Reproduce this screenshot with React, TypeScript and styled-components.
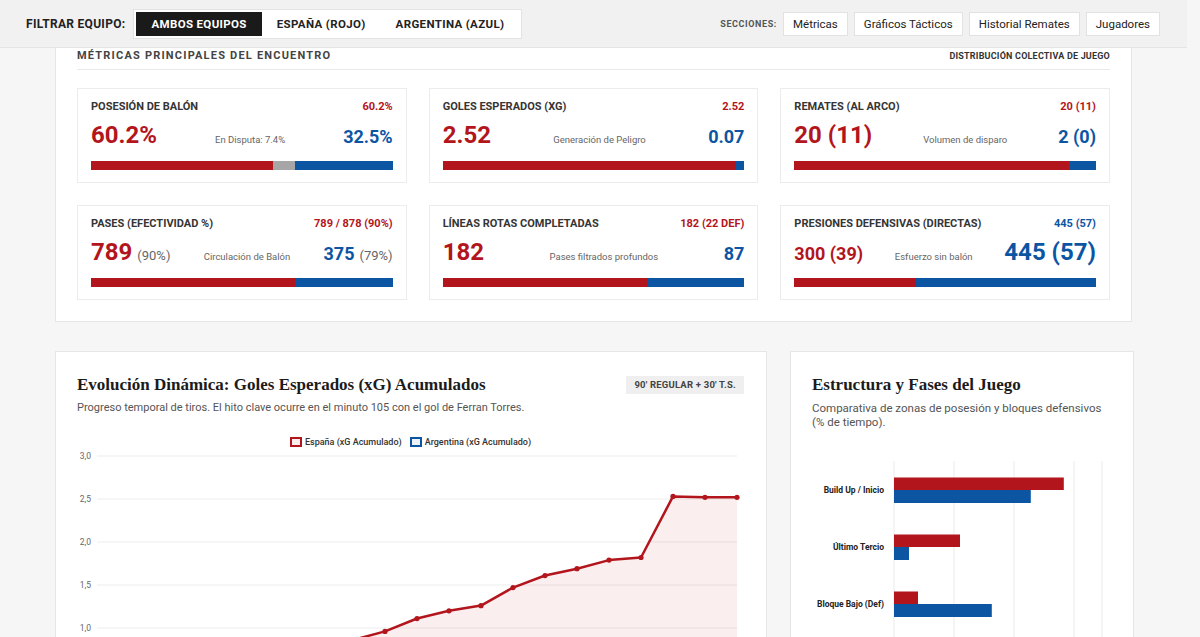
import React from 'react';
import styled, { createGlobalStyle } from 'styled-components';

const RED = '#b3151d';
const BLUE = '#0c55a3';
const GREY = '#a6a6a6';

const GlobalStyle = createGlobalStyle`
  * { box-sizing: border-box; }
  html, body { margin: 0; padding: 0; }
  body {
    background: #f6f6f6;
    font-family: Roboto, "Liberation Sans", Arial, sans-serif;
    color: #222;
    overflow-x: hidden;
  }
`;

const Page = styled.div`
  width: 1187px;
  padding-bottom: 40px;
`;

/* ---------- top toolbar ---------- */

const TopBar = styled.header`
  height: 48px;
  display: flex;
  align-items: center;
  justify-content: space-between;
  padding: 0 27px 0 26px;
  background: #f1f1f1;
  border-bottom: 1px solid #e4e4e4;
`;

const ToolGroup = styled.div<{ $gap: number }>`
  display: flex;
  align-items: center;
  gap: ${(p) => p.$gap}px;
`;

const FilterLabel = styled.span`
  font-size: 12px;
  font-weight: 700;
  letter-spacing: 0.3px;
  color: #222;
`;

const Segmented = styled.div`
  display: flex;
  padding: 2px;
  background: #fff;
  border: 1px solid #e3e3e3;
`;

const SegButton = styled.button<{ $active?: boolean }>`
  height: 24px;
  padding: 0 15px;
  border: 0;
  font-family: inherit;
  font-size: 11.5px;
  font-weight: 700;
  letter-spacing: 0.35px;
  text-transform: uppercase;
  background: ${(p) => (p.$active ? '#1a1a1a' : 'transparent')};
  color: ${(p) => (p.$active ? '#fff' : '#222')};
  cursor: pointer;
`;

const SectionsLabel = styled.span`
  font-size: 9px;
  font-weight: 700;
  letter-spacing: 0.6px;
  color: #555;
`;

const SectionButton = styled.button`
  height: 24px;
  padding: 0 9px;
  background: #fff;
  border: 1px solid #e2e2e2;
  font-family: inherit;
  font-size: 11.5px;
  color: #222;
  cursor: pointer;
`;

/* ---------- metrics panel ---------- */

const Main = styled.main`
  width: 1077px;
  margin: 0 auto;
`;

const MetricsPanel = styled.section`
  background: #fff;
  border: 1px solid #e6e6e6;
  border-top: none;
  padding: 0 21px 21px;
`;

const PanelHead = styled.div`
  display: flex;
  align-items: center;
  justify-content: space-between;
  padding: 1px 0 6px;
  border-bottom: 1px solid #e9e9e9;
`;

const PanelHeading = styled.h2`
  margin: 0;
  font-size: 11px;
  line-height: 14px;
  font-weight: 700;
  letter-spacing: 1.2px;
  color: #444;
`;

const PanelNote = styled.span`
  font-size: 9px;
  font-weight: 700;
  letter-spacing: 0.2px;
  color: #333;
`;

const CardsGrid = styled.div`
  margin-top: 18px;
  display: grid;
  grid-template-columns: repeat(3, 1fr);
  gap: 22px;
`;

const MetricCard = styled.article`
  border: 1px solid #ececec;
  padding: 11px 13px 12px;
  background: #fff;
`;

const CardTop = styled.div`
  display: flex;
  justify-content: space-between;
  font-size: 11px;
  line-height: 14px;
  font-weight: 700;
`;

const CardTitle = styled.span`
  color: #353535;
  text-transform: uppercase;
`;

const CardFigure = styled.span<{ $color: string }>`
  color: ${(p) => p.$color};
`;

const ValueRow = styled.div`
  margin-top: 7px;
  height: 28px;
  display: flex;
  align-items: baseline;
  justify-content: space-between;
`;

const BigValue = styled.span<{ $color: string; $lead?: boolean }>`
  font-size: ${(p) => (p.$lead ? '24px' : '18px')};
  line-height: 28px;
  font-weight: 700;
  color: ${(p) => p.$color};
`;

const Suffix = styled.span`
  font-size: 13px;
  font-weight: 400;
  color: #666;
  margin-left: 5px;
`;

const Caption = styled.span`
  font-size: 9.5px;
  color: #666;
`;

const Bar = styled.div`
  display: flex;
  height: 9px;
  margin-top: 12px;
`;

const BarPart = styled.div<{ $color: string; $share: number }>`
  width: ${(p) => p.$share}%;
  background: ${(p) => p.$color};
`;

/* ---------- charts ---------- */

const ChartsRow = styled.div`
  margin-top: 29px;
  display: grid;
  grid-template-columns: 1fr 344px;
  gap: 23px;
  align-items: start;
`;

const ChartPanel = styled.section`
  background: #fff;
  border: 1px solid #e6e6e6;
  padding: 22px 22px 24px 21px;
`;

const ChartHeader = styled.div`
  display: flex;
  align-items: center;
  justify-content: space-between;
`;

const ChartTitle = styled.h3`
  margin: 0;
  font-family: "Liberation Serif", "Times New Roman", serif;
  font-size: 17px;
  line-height: 22px;
  font-weight: 700;
  color: #1b1b1b;
`;

const Badge = styled.span`
  height: 18px;
  line-height: 18px;
  padding: 0 8px;
  background: #efefef;
  font-size: 9.5px;
  font-weight: 700;
  letter-spacing: 0.2px;
  color: #444;
`;

const Subtitle = styled.p<{ $wide?: boolean }>`
  margin: 5px 0 0;
  font-size: ${(p) => (p.$wide ? '11.5px' : '11px')};
  line-height: 14px;
  color: #555;
  max-width: ${(p) => (p.$wide ? '298px' : 'none')};
`;

const Legend = styled.div`
  margin-top: 21px;
  display: flex;
  justify-content: center;
  gap: 8px;
  font-size: 9px;
  line-height: 12px;
  font-weight: 500;
  color: #333;
`;

const LegendItem = styled.span`
  display: flex;
  align-items: center;
  gap: 3px;
`;

const Swatch = styled.span<{ $color: string; $tint: string }>`
  width: 12px;
  height: 10px;
  border: 2px solid ${(p) => p.$color};
  background: ${(p) => p.$tint};
`;

const ChartSvg = styled.svg`
  display: block;
  font-family: Roboto, "Liberation Sans", sans-serif;
`;

const BarsSvg = styled.svg`
  display: block;
  margin-top: 32px;
  font-family: Roboto, "Liberation Sans", sans-serif;
`;

/* ---------- data ---------- */

type Metric = {
  title: string;
  figure: string;
  figureColor: string;
  left: string;
  leftSuffix?: string;
  right: string;
  rightSuffix?: string;
  caption: string;
  lead: 'left' | 'right';
  parts: { color: string; share: number }[];
};

const metrics: Metric[] = [
  {
    title: 'Posesión de balón',
    figure: '60.2%',
    figureColor: RED,
    left: '60.2%',
    right: '32.5%',
    caption: 'En Disputa: 7.4%',
    lead: 'left',
    parts: [
      { color: RED, share: 60.2 },
      { color: GREY, share: 7.4 },
      { color: BLUE, share: 32.4 },
    ],
  },
  {
    title: 'Goles esperados (xG)',
    figure: '2.52',
    figureColor: RED,
    left: '2.52',
    right: '0.07',
    caption: 'Generación de Peligro',
    lead: 'left',
    parts: [
      { color: RED, share: (2.52 / 2.59) * 100 },
      { color: BLUE, share: (0.07 / 2.59) * 100 },
    ],
  },
  {
    title: 'Remates (al arco)',
    figure: '20 (11)',
    figureColor: RED,
    left: '20 (11)',
    right: '2 (0)',
    caption: 'Volumen de disparo',
    lead: 'left',
    parts: [
      { color: RED, share: (20 / 22) * 100 },
      { color: BLUE, share: (2 / 22) * 100 },
    ],
  },
  {
    title: 'Pases (efectividad %)',
    figure: '789 / 878 (90%)',
    figureColor: RED,
    left: '789',
    leftSuffix: '(90%)',
    right: '375',
    rightSuffix: '(79%)',
    caption: 'Circulación de Balón',
    lead: 'left',
    parts: [
      { color: RED, share: (789 / 1164) * 100 },
      { color: BLUE, share: (375 / 1164) * 100 },
    ],
  },
  {
    title: 'Líneas rotas completadas',
    figure: '182 (22 DEF)',
    figureColor: RED,
    left: '182',
    right: '87',
    caption: 'Pases filtrados profundos',
    lead: 'left',
    parts: [
      { color: RED, share: (182 / 269) * 100 },
      { color: BLUE, share: (87 / 269) * 100 },
    ],
  },
  {
    title: 'Presiones defensivas (directas)',
    figure: '445 (57)',
    figureColor: BLUE,
    left: '300 (39)',
    right: '445 (57)',
    caption: 'Esfuerzo sin balón',
    lead: 'right',
    parts: [
      { color: RED, share: (300 / 745) * 100 },
      { color: BLUE, share: (445 / 745) * 100 },
    ],
  },
];

// cumulative xG, one sample every 6 minutes (0' .. 120')
const spainXg = [0, 0.04, 0.1, 0.18, 0.29, 0.42, 0.55, 0.7, 0.86, 0.96, 1.11, 1.2, 1.26, 1.47, 1.61, 1.69, 1.79, 1.82, 2.53, 2.52, 2.52];
const argentinaXg = [0, 0, 0, 0.01, 0.01, 0.02, 0.02, 0.03, 0.03, 0.04, 0.04, 0.04, 0.05, 0.05, 0.05, 0.06, 0.06, 0.06, 0.07, 0.07, 0.07];

const phases = [
  { label: 'Build Up / Inicio', spain: 28.3, argentina: 22.8 },
  { label: 'Último Tercio', spain: 11, argentina: 2.5 },
  { label: 'Bloque Bajo (Def)', spain: 4, argentina: 16.3 },
  { label: 'Presión Alta', spain: 19.5, argentina: 8.5 },
];

/* ---------- pieces ---------- */

function MetricTile({ m }: { m: Metric }) {
  return (
    <MetricCard>
      <CardTop>
        <CardTitle>{m.title}</CardTitle>
        <CardFigure $color={m.figureColor}>{m.figure}</CardFigure>
      </CardTop>
      <ValueRow>
        <BigValue $color={RED} $lead={m.lead === 'left'}>
          {m.left}
          {m.leftSuffix && <Suffix>{m.leftSuffix}</Suffix>}
        </BigValue>
        <Caption>{m.caption}</Caption>
        <BigValue $color={BLUE} $lead={m.lead === 'right'}>
          {m.right}
          {m.rightSuffix && <Suffix>{m.rightSuffix}</Suffix>}
        </BigValue>
      </ValueRow>
      <Bar>
        {m.parts.map((p, i) => (
          <BarPart key={i} $color={p.color} $share={p.share} />
        ))}
      </Bar>
    </MetricCard>
  );
}

function XgChart() {
  const W = 667;
  const top = 8;
  const unit = 86;
  const left = 20;
  const right = 660;
  const step = (right - left) / (spainXg.length - 1);
  const y = (v: number) => top + (3 - v) * unit;
  const x = (i: number) => left + i * step;
  const ticks = [3, 2.5, 2, 1.5, 1, 0.5, 0];
  const line = (d: number[]) => d.map((v, i) => `${i ? 'L' : 'M'}${x(i).toFixed(1)},${y(v).toFixed(1)}`).join(' ');
  const area = `${line(spainXg)} L${right},${y(0)} L${left},${y(0)} Z`;
  return (
    <ChartSvg width={W} height={300} viewBox={`0 0 ${W} 300`}>
      {ticks.map((t) => (
        <g key={t}>
          <line x1={left} x2={right} y1={y(t)} y2={y(t)} stroke="#ededed" strokeWidth={1} />
          <text x={14} y={y(t) + 3} fontSize={8.5} fill="#666" textAnchor="end">
            {t.toFixed(1).replace('.', ',')}
          </text>
        </g>
      ))}
      <path d={area} fill="rgba(179,21,29,0.07)" />
      <path d={line(argentinaXg)} fill="none" stroke={BLUE} strokeWidth={2.5} strokeLinejoin="round" />
      <path d={line(spainXg)} fill="none" stroke={RED} strokeWidth={2.5} strokeLinejoin="round" />
      {spainXg.map((v, i) => (
        <circle key={i} cx={x(i)} cy={y(v)} r={2.6} fill={RED} />
      ))}
      {spainXg.map((_, i) =>
        i % 5 === 0 ? (
          <text key={i} x={x(i)} y={y(0) + 16} fontSize={8.5} fill="#666" textAnchor="middle">
            {`${i * 6}'`}
          </text>
        ) : null,
      )}
    </ChartSvg>
  );
}

function PhaseChart() {
  const W = 302;
  const axis = 82;
  const px = 6; // pixels per percentage point
  const band = 57;
  const H = band * phases.length;
  const grid = [0, 10, 20, 30].map((v) => axis + v * px).concat(290);
  return (
    <BarsSvg width={W} height={H + 24} viewBox={`0 0 ${W} ${H + 24}`}>
      {grid.map((gx) => (
        <line key={gx} x1={gx} x2={gx} y1={0} y2={H} stroke="#ebebeb" strokeWidth={1} />
      ))}
      {phases.map((p, i) => {
        const c = i * band + 29;
        return (
          <g key={p.label}>
            <text x={72} y={c + 3} fontSize={8.5} fontWeight={700} fill="#222" textAnchor="end">
              {p.label}
            </text>
            <rect x={axis} y={c - 12.5} width={p.spain * px} height={12.5} fill={RED} />
            <rect x={axis} y={c} width={p.argentina * px} height={13} fill={BLUE} />
          </g>
        );
      })}
      {[0, 10, 20, 30].map((v) => (
        <text key={v} x={axis + v * px} y={H + 14} fontSize={8.5} fill="#666" textAnchor="middle">
          {`${v}%`}
        </text>
      ))}
    </BarsSvg>
  );
}

export default function App() {
  return (
    <Page>
      <GlobalStyle />
      <TopBar>
        <ToolGroup $gap={8}>
          <FilterLabel>FILTRAR EQUIPO:</FilterLabel>
          <Segmented>
            <SegButton $active>Ambos equipos</SegButton>
            <SegButton>España (Rojo)</SegButton>
            <SegButton>Argentina (Azul)</SegButton>
          </Segmented>
        </ToolGroup>
        <ToolGroup $gap={6}>
          <SectionsLabel>SECCIONES:</SectionsLabel>
          <SectionButton>Métricas</SectionButton>
          <SectionButton>Gráficos Tácticos</SectionButton>
          <SectionButton>Historial Remates</SectionButton>
          <SectionButton>Jugadores</SectionButton>
        </ToolGroup>
      </TopBar>

      <Main>
        <MetricsPanel>
          <PanelHead>
            <PanelHeading>MÉTRICAS PRINCIPALES DEL ENCUENTRO</PanelHeading>
            <PanelNote>DISTRIBUCIÓN COLECTIVA DE JUEGO</PanelNote>
          </PanelHead>
          <CardsGrid>
            {metrics.map((m) => (
              <MetricTile key={m.title} m={m} />
            ))}
          </CardsGrid>
        </MetricsPanel>

        <ChartsRow>
          <ChartPanel>
            <ChartHeader>
              <ChartTitle>Evolución Dinámica: Goles Esperados (xG) Acumulados</ChartTitle>
              <Badge>90' REGULAR + 30' T.S.</Badge>
            </ChartHeader>
            <Subtitle>
              Progreso temporal de tiros. El hito clave ocurre en el minuto 105 con el gol de Ferran Torres.
            </Subtitle>
            <Legend>
              <LegendItem>
                <Swatch $color={RED} $tint="rgba(179,21,29,0.08)" />
                España (xG Acumulado)
              </LegendItem>
              <LegendItem>
                <Swatch $color={BLUE} $tint="rgba(12,85,163,0.08)" />
                Argentina (xG Acumulado)
              </LegendItem>
            </Legend>
            <XgChart />
          </ChartPanel>

          <ChartPanel>
            <ChartTitle>Estructura y Fases del Juego</ChartTitle>
            <Subtitle $wide>Comparativa de zonas de posesión y bloques defensivos (% de tiempo).</Subtitle>
            <PhaseChart />
          </ChartPanel>
        </ChartsRow>
      </Main>
    </Page>
  );
}
